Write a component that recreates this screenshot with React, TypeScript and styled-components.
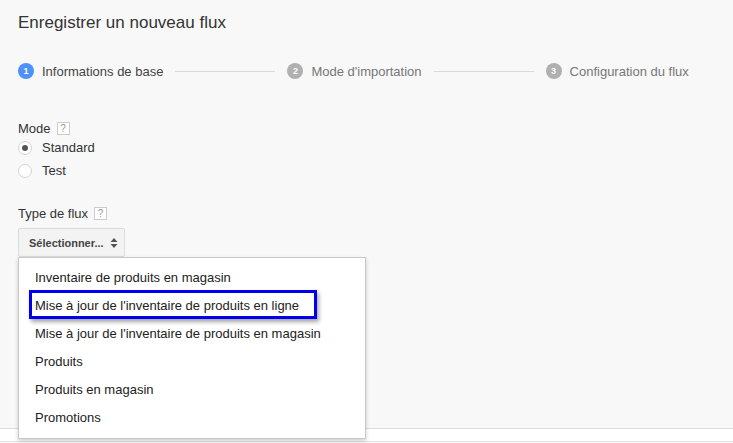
import React from "react";
import styled, { createGlobalStyle } from "styled-components";

const Global = createGlobalStyle`
  html, body { margin: 0; padding: 0; background: #f8f8f8; }
  body { font-family: Arial, "Liberation Sans", sans-serif; }
  * { box-sizing: border-box; }
`;

const Page = styled.div`
  width: 733px;
  height: 443px;
  display: flex;
  flex-direction: column;
  overflow: hidden;
  position: relative;
`;

const Main = styled.div`
  flex: 1;
  background: #f8f8f8;
  padding: 12px 18px 0 18px;
`;

const Footer = styled.div`
  height: 14px;
  background: #fff;
  border-top: 1px solid #dcdcdc;
  border-bottom: 1px solid #e4e4e4;
  margin-bottom: 1px;
`;

const Title = styled.h1`
  margin: 0;
  font-size: 17px;
  line-height: 22px;
  font-weight: normal;
  color: #333;
`;

const Stepper = styled.div`
  display: flex;
  align-items: center;
  margin-top: 26px;
  height: 22px;
`;

const Step = styled.div<{ active?: boolean }>`
  display: flex;
  align-items: center;
  gap: 8px;
  font-size: 13px;
  color: ${(p) => (p.active ? "#444" : "#777")};
  white-space: nowrap;
`;

const Num = styled.span<{ active?: boolean }>`
  width: 16px;
  height: 16px;
  border-radius: 50%;
  background: ${(p) => (p.active ? "#4d90fe" : "#b0b0b0")};
  color: #fff;
  font-size: 9px;
  font-weight: bold;
  display: flex;
  align-items: center;
  justify-content: center;
`;

const Connector = styled.div`
  width: 100px;
  height: 1px;
  background: #dadada;
  margin: 0 12px;
`;

const Section = styled.div<{ mt: number }>`
  margin-top: ${(p) => p.mt}px;
`;

const Label = styled.div`
  display: flex;
  align-items: center;
  gap: 6px;
  font-size: 13px;
  color: #333;
  height: 16px;
`;

const Help = styled.span`
  width: 13px;
  height: 13px;
  border: 1px solid #ccc;
  background: #fff;
  color: #999;
  font-size: 10px;
  display: inline-flex;
  align-items: center;
  justify-content: center;
`;

const RadioRow = styled.label`
  display: flex;
  align-items: center;
  gap: 10px;
  font-size: 13px;
  color: #333;
  height: 23px;
`;

const RadioCircle = styled.span<{ checked?: boolean }>`
  width: 14px;
  height: 14px;
  border-radius: 50%;
  border: 1px solid #d4d4d4;
  background: #fff;
  display: flex;
  align-items: center;
  justify-content: center;
  &::after {
    content: "";
    width: 6px;
    height: 6px;
    border-radius: 50%;
    background: ${(p) => (p.checked ? "#555" : "transparent")};
  }
`;

const SelectWrap = styled.div`
  position: relative;
  margin-top: 7px;
  width: 107px;
`;

const SelectButton = styled.div`
  height: 29px;
  width: 107px;
  border: 1px solid #dcdcdc;
  border-radius: 2px;
  background: #f3f3f3;
  display: flex;
  align-items: center;
  padding: 0 0 0 10px;
  gap: 6px;
  font-size: 11px;
  font-weight: bold;
  color: #444;
`;

const Menu = styled.ul`
  position: absolute;
  top: 29px;
  left: 0;
  width: 348px;
  height: 182px;
  margin: 0;
  padding: 5px 0 0 0;
  list-style: none;
  background: #fff;
  border: 1px solid #c8c8c8;
  box-shadow: 0 2px 4px rgba(0, 0, 0, 0.2);
  z-index: 5;
`;

const Item = styled.li`
  position: relative;
  height: 28px;
  display: flex;
  align-items: center;
  padding-left: 16px;
  font-size: 13px;
  color: #222;
  white-space: nowrap;
`;

const HighlightBox = styled.span`
  position: absolute;
  left: 10px;
  top: -1px;
  width: 288px;
  height: 29px;
  border: 3px solid #0000ee;
  box-shadow: 2px 3px 4px rgba(0, 0, 0, 0.35);
  pointer-events: none;
`;

const items = [
  "Inventaire de produits en magasin",
  "Mise à jour de l'inventaire de produits en ligne",
  "Mise à jour de l'inventaire de produits en magasin",
  "Produits",
  "Produits en magasin",
  "Promotions",
];

export default function App() {
  return (
    <>
      <Global />
      <Page>
        <Main>
          <Title>Enregistrer un nouveau flux</Title>
          <Stepper>
            <Step active>
              <Num active>1</Num>
              Informations de base
            </Step>
            <Connector />
            <Step>
              <Num>2</Num>
              Mode d'importation
            </Step>
            <Connector />
            <Step>
              <Num>3</Num>
              Configuration du flux
            </Step>
          </Stepper>
          <Section mt={38}>
            <Label>
              Mode <Help>?</Help>
            </Label>
            <RadioRow>
              <RadioCircle checked />
              Standard
            </RadioRow>
            <RadioRow>
              <RadioCircle />
              Test
            </RadioRow>
          </Section>
          <Section mt={23}>
            <Label>
              Type de flux <Help>?</Help>
            </Label>
            <SelectWrap>
              <SelectButton>
                Sélectionner...
                <svg width="8" height="12" viewBox="0 0 8 12">
                  <path d="M4 1 L7.5 5 H0.5 Z" fill="#555" />
                  <path d="M4 11 L7.5 7 H0.5 Z" fill="#555" />
                </svg>
              </SelectButton>
              <Menu>
                {items.map((t, i) => (
                  <Item key={t}>
                    {t}
                    {i === 1 && <HighlightBox />}
                  </Item>
                ))}
              </Menu>
            </SelectWrap>
          </Section>
        </Main>
        <Footer />
      </Page>
    </>
  );
}
